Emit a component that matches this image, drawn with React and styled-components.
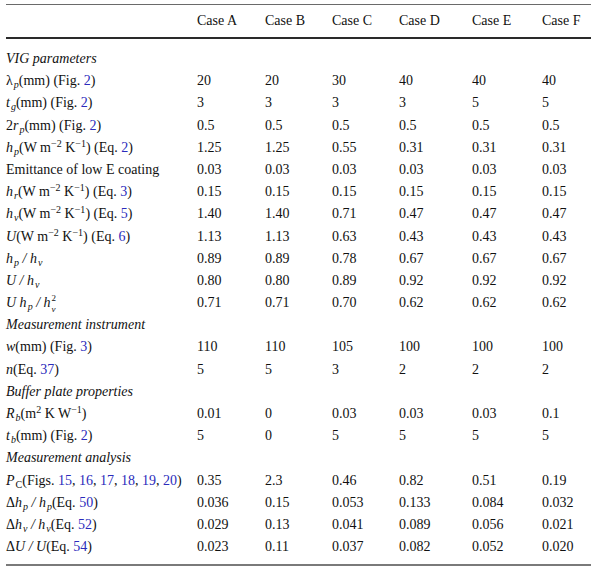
import React from "react";
import styled, { createGlobalStyle } from "styled-components";

const GlobalStyle = createGlobalStyle`
  html, body { margin: 0; padding: 0; background: #fff; }
  body {
    font-family: "Liberation Serif", "Times New Roman", serif;
    font-size: 14px;
    color: #111;
  }
`;

const COLS = "191px 68px 67px 67px 73px 70px 49px";

const Table = styled.div`
  width: 585px;
  margin: 4px 0 0 6px;
  border-top: 1px solid #6a6a6a;
  border-bottom: 2px solid #7a7a7a;
`;

const Head = styled.div`
  display: grid;
  grid-template-columns: ${COLS};
  height: 32px;
  align-items: center;
  border-bottom: 2px solid #2a2a2a;
`;

const Body = styled.div`
  padding: 9px 0 6px;
`;

const Row = styled.div`
  display: grid;
  grid-template-columns: ${COLS};
  height: 22.2px;
  line-height: 22.2px;
  align-items: center;
  white-space: nowrap;
`;

const Cell = styled.div`
  text-align: left;
`;

const Section = styled.div`
  height: 22.2px;
  line-height: 22.2px;
  font-style: italic;
`;

const Ref = styled.span`
  color: #2b2bbb;
`;

const Sub = styled.sub`
  font-size: 10px;
  line-height: 0;
  vertical-align: -3px;
  margin-left: 1px;
`;

const Sup = styled.sup`
  font-size: 10px;
  line-height: 0;
  vertical-align: 5px;
`;

const Stack = styled.span`
  display: inline-flex;
  flex-direction: column;
  vertical-align: middle;
  font-size: 9px;
  line-height: 10.5px;
  margin-left: 1px;
  & > * {
    display: block;
    height: 10.5px;
  }
`;

const I = styled.i`
  font-style: italic;
`;

const WK = () => (
  <>
    (W m<Sup>−2</Sup> K<Sup>−1</Sup>)
  </>
);

const sections = [
  {
    title: "VIG parameters",
    rows: [
      [<>λ<Sub><I>p</I></Sub>(mm) (Fig. <Ref>2</Ref>)</>, ["20", "20", "30", "40", "40", "40"]],
      [<><I>t</I><Sub><I>g</I></Sub>(mm) (Fig. <Ref>2</Ref>)</>, ["3", "3", "3", "3", "5", "5"]],
      [<>2<I>r</I><Sub><I>p</I></Sub>(mm) (Fig. <Ref>2</Ref>)</>, ["0.5", "0.5", "0.5", "0.5", "0.5", "0.5"]],
      [<><I>h</I><Sub><I>p</I></Sub><WK /> (Eq. <Ref>2</Ref>)</>, ["1.25", "1.25", "0.55", "0.31", "0.31", "0.31"]],
      [<>Emittance of low E coating</>, ["0.03", "0.03", "0.03", "0.03", "0.03", "0.03"]],
      [<><I>h</I><Sub><I>r</I></Sub><WK /> (Eq. <Ref>3</Ref>)</>, ["0.15", "0.15", "0.15", "0.15", "0.15", "0.15"]],
      [<><I>h</I><Sub><I>v</I></Sub><WK /> (Eq. <Ref>5</Ref>)</>, ["1.40", "1.40", "0.71", "0.47", "0.47", "0.47"]],
      [<><I>U</I><WK /> (Eq. <Ref>6</Ref>)</>, ["1.13", "1.13", "0.63", "0.43", "0.43", "0.43"]],
      [<><I>h</I><Sub><I>p</I></Sub><I> / h</I><Sub><I>v</I></Sub></>, ["0.89", "0.89", "0.78", "0.67", "0.67", "0.67"]],
      [<><I>U / h</I><Sub><I>v</I></Sub></>, ["0.80", "0.80", "0.89", "0.92", "0.92", "0.92"]],
      [<><I>U h</I><Sub><I>p</I></Sub><I> / h</I><Stack><span>2</span><I>v</I></Stack></>, ["0.71", "0.71", "0.70", "0.62", "0.62", "0.62"]],
    ],
  },
  {
    title: "Measurement instrument",
    rows: [
      [<><I>w</I>(mm) (Fig. <Ref>3</Ref>)</>, ["110", "110", "105", "100", "100", "100"]],
      [<><I>n</I>(Eq. <Ref>37</Ref>)</>, ["5", "5", "3", "2", "2", "2"]],
    ],
  },
  {
    title: "Buffer plate properties",
    rows: [
      [<><I>R</I><Sub><I>b</I></Sub>(m<Sup>2</Sup> K W<Sup>−1</Sup>)</>, ["0.01", "0", "0.03", "0.03", "0.03", "0.1"]],
      [<><I>t</I><Sub><I>b</I></Sub>(mm) (Fig. <Ref>2</Ref>)</>, ["5", "0", "5", "5", "5", "5"]],
    ],
  },
  {
    title: "Measurement analysis",
    rows: [
      [<><I>P</I><Sub>C</Sub>(Figs. <Ref>15</Ref>, <Ref>16</Ref>, <Ref>17</Ref>, <Ref>18</Ref>, <Ref>19</Ref>, <Ref>20</Ref>)</>, ["0.35", "2.3", "0.46", "0.82", "0.51", "0.19"]],
      [<>Δ<I>h</I><Sub><I>p</I></Sub><I> / h</I><Sub><I>p</I></Sub>(Eq. <Ref>50</Ref>)</>, ["0.036", "0.15", "0.053", "0.133", "0.084", "0.032"]],
      [<>Δ<I>h</I><Sub><I>v</I></Sub><I> / h</I><Sub><I>v</I></Sub>(Eq. <Ref>52</Ref>)</>, ["0.029", "0.13", "0.041", "0.089", "0.056", "0.021"]],
      [<>Δ<I>U / U</I>(Eq. <Ref>54</Ref>)</>, ["0.023", "0.11", "0.037", "0.082", "0.052", "0.020"]],
    ],
  },
];

const cases = ["Case A", "Case B", "Case C", "Case D", "Case E", "Case F"];

export default function App() {
  return (
    <>
      <GlobalStyle />
      <Table>
        <Head>
          <Cell />
          {cases.map((c) => (
            <Cell key={c}>{c}</Cell>
          ))}
        </Head>
        <Body>
          {sections.map((s) => (
            <React.Fragment key={s.title}>
              <Section>{s.title}</Section>
              {s.rows.map(([label, vals], i) => (
                <Row key={i}>
                  <Cell>{label}</Cell>
                  {vals.map((v, j) => (
                    <Cell key={j}>{v}</Cell>
                  ))}
                </Row>
              ))}
            </React.Fragment>
          ))}
        </Body>
      </Table>
    </>
  );
}
